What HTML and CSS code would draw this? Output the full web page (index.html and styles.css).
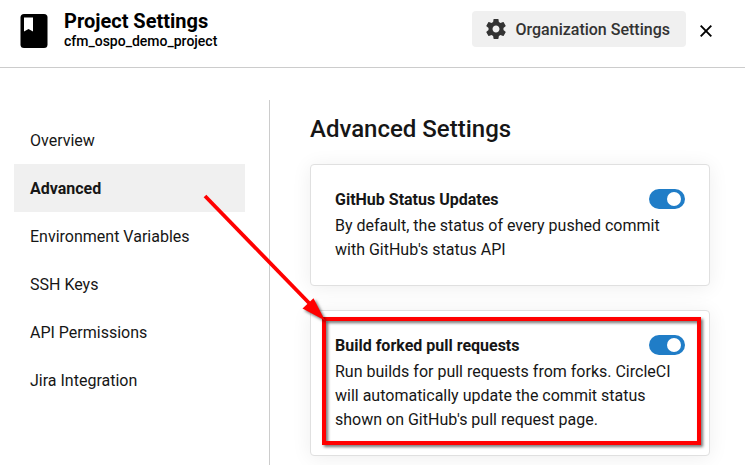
FILE: index.html
```html
<!DOCTYPE html>
<html lang="en">
<head>
<meta charset="utf-8">
<title>Project Settings</title>
<link rel="stylesheet" href="styles.css">
</head>
<body>
<header class="header">
  <svg class="book" width="28" height="34" viewBox="0 0 28 34"><rect x="0.5" width="27" height="34" rx="3.5"/><path d="M4 3.500h9v14l-4.500-2.500-4.500 2.500z" fill="#fff"/></svg>
  <div class="titles">
    <h1>Project Settings</h1>
    <p>cfm_ospo_demo_project</p>
  </div>
  <button class="org">
    <svg width="24" height="24" viewBox="0 0 24 24"><path fill="#333" d="M19.430 12.980c.04-.32.07-.64.07-.98s-.03-.66-.07-.98l2.110-1.650c.19-.15.24-.42.12-.64l-2-3.460c-.12-.22-.39-.3-.61-.22l-2.490 1c-.52-.4-1.080-.73-1.690-.98l-.38-2.650C14.460 2.180 14.250 2 14 2h-4c-.25 0-.46.18-.49.42l-.38 2.650c-.61.25-1.170.59-1.690.98l-2.490-1c-.23-.09-.49 0-.61.22l-2 3.460c-.13.22-.07.49.12.64l2.110 1.650c-.04.32-.07.65-.07.98s.03.66.07.98l-2.110 1.650c-.19.15-.24.42-.12.64l2 3.460c.12.22.39.3.61.22l2.490-1c.52.4 1.080.73 1.690.98l.38 2.650c.03.24.24.42.49.42h4c.25 0 .46-.18.49-.42l.38-2.650c.61-.25 1.170-.59 1.690-.98l2.490 1c.23.09.49 0 .61-.22l2-3.460c.12-.22.07-.49-.12-.64l-2.110-1.650zM12 15.500c-1.930 0-3.500-1.570-3.500-3.500s1.570-3.500 3.500-3.500 3.500 1.570 3.500 3.500-1.570 3.500-3.500 3.500z"/></svg>
    <span>Organization Settings</span>
  </button>
  <svg class="close" width="12" height="12" viewBox="0 0 12 12"><path d="M.7.7l10.600 10.600M11.300.7L.7 11.300" stroke="#000" stroke-width="1.900"/></svg>
</header>
<div class="layout">
  <nav class="sidebar">
    <a>Overview</a>
    <a class="active">Advanced</a>
    <a>Environment Variables</a>
    <a>SSH Keys</a>
    <a>API Permissions</a>
    <a>Jira Integration</a>
  </nav>
  <main class="content">
    <h2>Advanced Settings</h2>
    <section class="card">
      <div class="card-head"><h3>GitHub Status Updates</h3><span class="toggle"></span></div>
      <p>By default, the status of every pushed commit<br>with GitHub's status API</p>
    </section>
    <section class="card">
      <div class="card-head"><h3>Build forked pull requests</h3><span class="toggle"></span></div>
      <p>Run builds for pull requests from forks. CircleCI<br>will automatically update the commit status<br>shown on GitHub's pull request page.</p>
    </section>
  </main>
</div>
<svg class="annotation" width="745" height="465" viewBox="0 0 745 465">
  <path d="M205 196L311 305" stroke="#f00" stroke-width="3.800"/>
  <rect class="lifted" x="324" y="319" width="375" height="124" fill="none" stroke="#f00" stroke-width="4"/>
  <path class="lifted" d="M325 320.500L313.500 298.300L302.500 308.500z" fill="#f00"/>
</svg>
</body>
</html>
```
FILE: styles.css
```css
* { box-sizing: border-box; margin: 0; padding: 0; }
body {
  width: 745px;
  height: 465px;
  overflow: hidden;
  background: #fff;
  color: #161616;
  font: 16px/24px Roboto, sans-serif;
}
.header {
  display: flex;
  align-items: flex-start;
  height: 68px;
  padding: 0 33px 0 20px;
  border-bottom: 1px solid #ccc;
  color: #000;
}
.book { margin-top: 14px; }
.titles { margin: 9px 0 0 16px; }
h1 { font-size: 20px; line-height: 24px; font-weight: 700; }
.titles p { font-size: 14px; line-height: 16px; font-weight: 500; }
.org {
  display: flex;
  align-items: center;
  gap: 7.5px;
  width: 214px;
  height: 36px;
  margin: 11px 14px 0 auto;
  padding: 0 12px;
  border: 0;
  border-radius: 4px;
  background: #f0f0f0;
  color: #333;
  font: 500 16px/24px Roboto, sans-serif;
  white-space: nowrap;
}
.org span { padding-top: 2px; }
.close { margin-top: 25px; }
.layout { display: flex; margin-top: 32px; height: 365px; }
.sidebar {
  width: 270px;
  padding: 16px 24px 0 14px;
  border-right: 1px solid #ccc;
}
.sidebar a { display: block; height: 48px; padding: 13px 16px 11px; }
.sidebar .active { background: #f0f0f0; font-weight: 700; }
.content { width: 440px; padding: 13px 0 0 40px; }
h2 { font-size: 24px; line-height: 32px; font-weight: 500; margin-bottom: 19px; }
.card {
  padding: 24px;
  margin-bottom: 24px;
  border: 1px solid #e0e0e0;
  border-radius: 4px;
  background: #fff;
  box-shadow: 0 2px 20px rgba(0, 0, 0, .07);
}
.card-head {
  display: flex;
  justify-content: space-between;
  height: 20px;
  margin-bottom: 5px;
}
h3 { padding-top: 1px; font-size: 16px; line-height: 20px; font-weight: 700; }
.card p { margin-bottom: -1px; white-space: nowrap; }
.toggle {
  width: 36px;
  height: 20px;
  padding: 3px 4px 3px 18px;
  border-radius: 10px;
  background: #207dc7;
}
.toggle::before {
  content: "";
  display: block;
  width: 14px;
  height: 14px;
  border-radius: 50%;
  background: #fff;
}
.annotation {
  position: absolute;
  top: 0;
  left: 0;
}
.lifted { filter: drop-shadow(2px 2px 1.500px rgba(0, 0, 0, .55)); }
```
